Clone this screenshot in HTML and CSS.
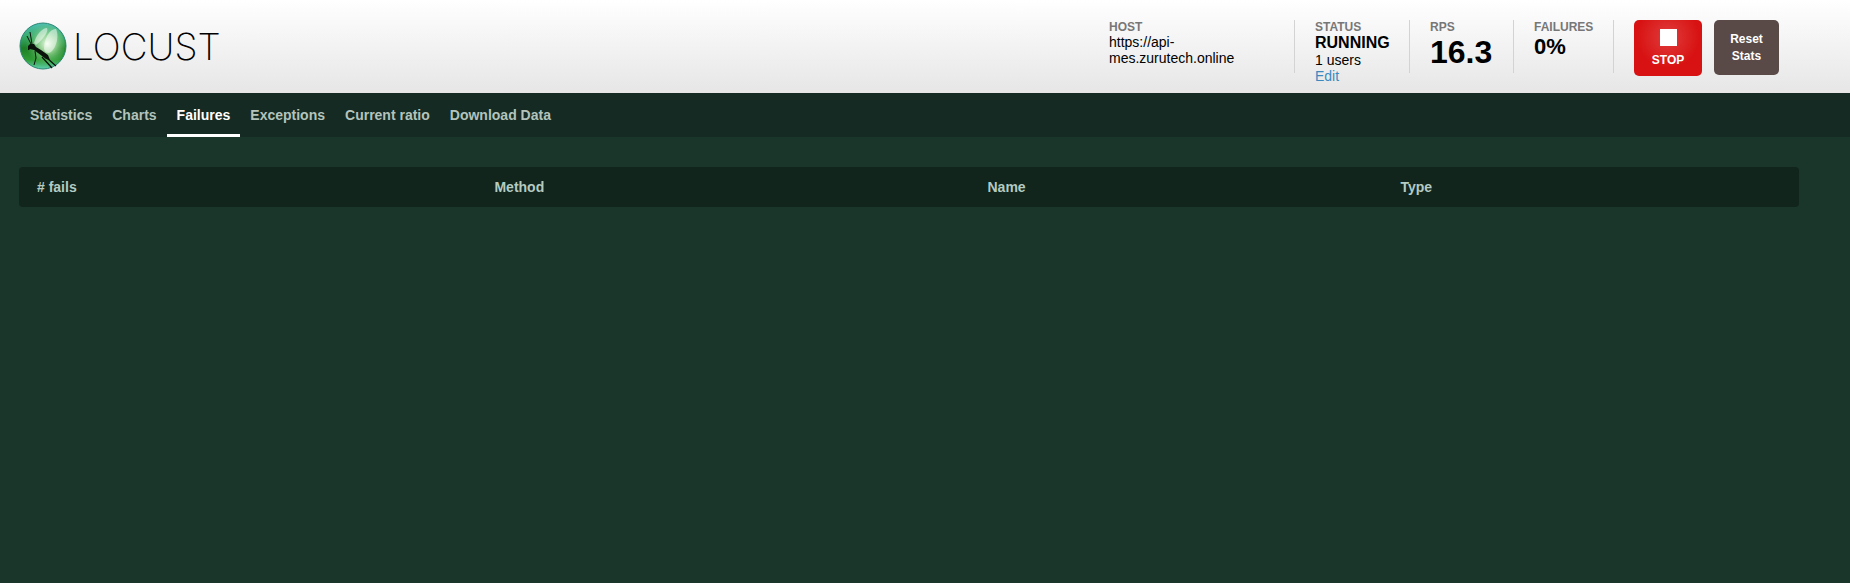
FILE: index.html
```html
<!DOCTYPE html>
<html lang="en">
<head>
    <meta charset="UTF-8">
    <meta name="viewport" content="width=device-width, initial-scale=1.0">
    <title>Locust</title>
    <link rel="stylesheet" href="styles.css">
</head>
<body>

    <header class="top">
        <div class="container">
            <a class="logo" href="#">
                <svg width="48" height="48" viewBox="0 0 48 48" aria-hidden="true">
                    <defs>
                        <linearGradient id="ball" x1="0" y1="0" x2="0" y2="1">
                            <stop offset="0" stop-color="#4fc0b8"/>
                            <stop offset="0.3" stop-color="#37ab6c"/>
                            <stop offset="0.55" stop-color="#1d7f26"/>
                            <stop offset="0.8" stop-color="#2f9c35"/>
                            <stop offset="1" stop-color="#5fd0b0"/>
                        </linearGradient>
                        <radialGradient id="glow" cx="0.6" cy="0.45" r="0.5">
                            <stop offset="0" stop-color="#effbe9"/>
                            <stop offset="0.4" stop-color="#a9dfa5" stop-opacity="0.8"/>
                            <stop offset="1" stop-color="#4fb45a" stop-opacity="0"/>
                        </radialGradient>
                    </defs>
                    <circle cx="24" cy="24" r="23" fill="url(#ball)" stroke="#2a8572" stroke-width="1"/>
                    <circle cx="24" cy="24" r="22" fill="url(#glow)"/>
                    <!-- wings -->
                    <path d="M15 21C17 13 23 6 28 6c2 4-4 11-11 17z" fill="#fff" fill-opacity="0.5"/>
                    <path d="M25 27C25 15 32 6 37 7c4 8-1 22-7 24-3 0-4-1-5-4z" fill="#fff" fill-opacity="0.5"/>
                    <!-- body -->
                    <path d="M9 28l0-4 2-2 4 0 2 3 5 3 7 5 2 5-4-1-8-6-4-3-4-1-1 1z" fill="#0b120c"/>
                    <g fill="none" stroke="#0b120c" stroke-width="1">
                        <path d="M12 22L8 14M13 22L11 10M16 29l1 7-2 7"/>
                        <path d="M23 35l10 11M28 36l9 8" stroke-width="1.3"/>
                    </g>
                </svg>
                <span>LOCUST</span>
            </a>
            <div class="boxes">
                <div class="box box-host">
                    <div class="label">HOST</div>
                    <div>https://api-mes.zurutech.online</div>
                </div>
                <div class="box box-status">
                    <div class="label">STATUS</div>
                    <div class="status">RUNNING</div>
                    <div>1 users</div>
                    <a class="edit" href="#">Edit</a>
                </div>
                <div class="box box-rps">
                    <div class="label">RPS</div>
                    <div class="rps">16.3</div>
                </div>
                <div class="box box-failures">
                    <div class="label">FAILURES</div>
                    <div class="failures">0%</div>
                </div>
                <button type="button" class="stop"><span class="square"></span>STOP</button>
                <button type="button" class="reset">Reset Stats</button>
            </div>
        </div>
    </header>

    <nav>
        <ul>
            <li><a href="#">Statistics</a></li>
            <li><a href="#">Charts</a></li>
            <li><a href="#" class="current">Failures</a></li>
            <li><a href="#">Exceptions</a></li>
            <li><a href="#">Current ratio</a></li>
            <li><a href="#">Download Data</a></li>
        </ul>
    </nav>

    <main>
        <table>
            <thead>
                <tr>
                    <th class="fails" scope="col"># fails</th>
                    <th class="method" scope="col">Method</th>
                    <th class="name" scope="col">Name</th>
                    <th class="type" scope="col">Type</th>
                </tr>
            </thead>
        </table>
    </main>

</body>
</html>
```

FILE: styles.css
```css
* {
    box-sizing: border-box;
}

body {
    margin: 0;
    background: #1a352a;
    color: #b3c3bc;
    font-family: "Liberation Sans", Arial, sans-serif;
    font-size: 14px;
}

/* Header */
.top {
    height: 93px;
    background: linear-gradient(#fff, #e6e6e6);
    color: #000;
}

.container {
    display: flex;
    justify-content: space-between;
    margin: 0 71px 0 19px;
    padding-top: 20px;
}

.logo {
    display: flex;
    align-items: center;
    gap: 6px;
    height: 52px;
    color: #000;
    font-family: Inter, sans-serif;
    font-size: 37px;
    font-weight: 200;
    text-decoration: none;
}

.boxes {
    display: flex;
    align-items: flex-start;
}

.box {
    height: 53px;
    margin-right: 20px;
    padding-right: 20px;
    border-right: 1px solid #d3d3d3;
    line-height: 16px;
}

.label {
    color: #777;
    font-size: 12px;
    font-weight: bold;
    line-height: 14px;
}

.box-host {
    width: 186px;
    padding-right: 50px;
}

.box-status {
    width: 95px;
}

.box-rps {
    width: 84px;
}

.box-failures {
    width: 80px;
    padding-right: 0;
}

.status {
    font-size: 16px;
    font-weight: bold;
    line-height: 18px;
}

.edit {
    color: #3a8ac0;
    text-decoration: none;
}

.rps {
    font-size: 32px;
    font-weight: bold;
    line-height: 36px;
}

.failures {
    font-size: 22px;
    font-weight: bold;
    line-height: 26px;
}

button {
    border: 0;
    border-radius: 5px;
    color: #fff;
    font-family: inherit;
    font-size: 12px;
    font-weight: bold;
    cursor: pointer;
}

.stop {
    width: 68px;
    height: 56px;
    margin-right: 12px;
    padding: 0;
    background: radial-gradient(circle at 50% 30%, #e03c3c, #d81212 60%);
}

.square {
    display: block;
    width: 17px;
    height: 17px;
    margin: 0 auto 7px;
    background: #fff;
}

.reset {
    width: 65px;
    height: 55px;
    padding: 0 12px;
    background: #594a48;
    line-height: 17px;
}

/* Tabs */
nav {
    background: #152a22;
}

nav ul {
    display: flex;
    margin: 0;
    padding: 0 20px;
    list-style: none;
}

nav a {
    display: block;
    height: 44px;
    padding: 0 10px;
    border-bottom: 3px solid transparent;
    color: #b3c3bc;
    font-weight: bold;
    line-height: 44px;
    text-decoration: none;
}

nav a.current {
    border-bottom-color: #fff;
    color: #fff;
}

/* Failures table */
main {
    padding: 30px 51px 30px 19px;
}

table {
    width: 100%;
    border-collapse: collapse;
    table-layout: fixed;
}

th {
    height: 40px;
    padding: 0 18px;
    background: #12251c;
    color: #b3cbc2;
    text-align: left;
}

th:first-child {
    border-radius: 4px 0 0 4px;
}

th:last-child {
    border-radius: 0 4px 4px 0;
}

.fails {
    width: 25.7%;
}

.method {
    width: 27.7%;
}

.name {
    width: 23.2%;
}
```
